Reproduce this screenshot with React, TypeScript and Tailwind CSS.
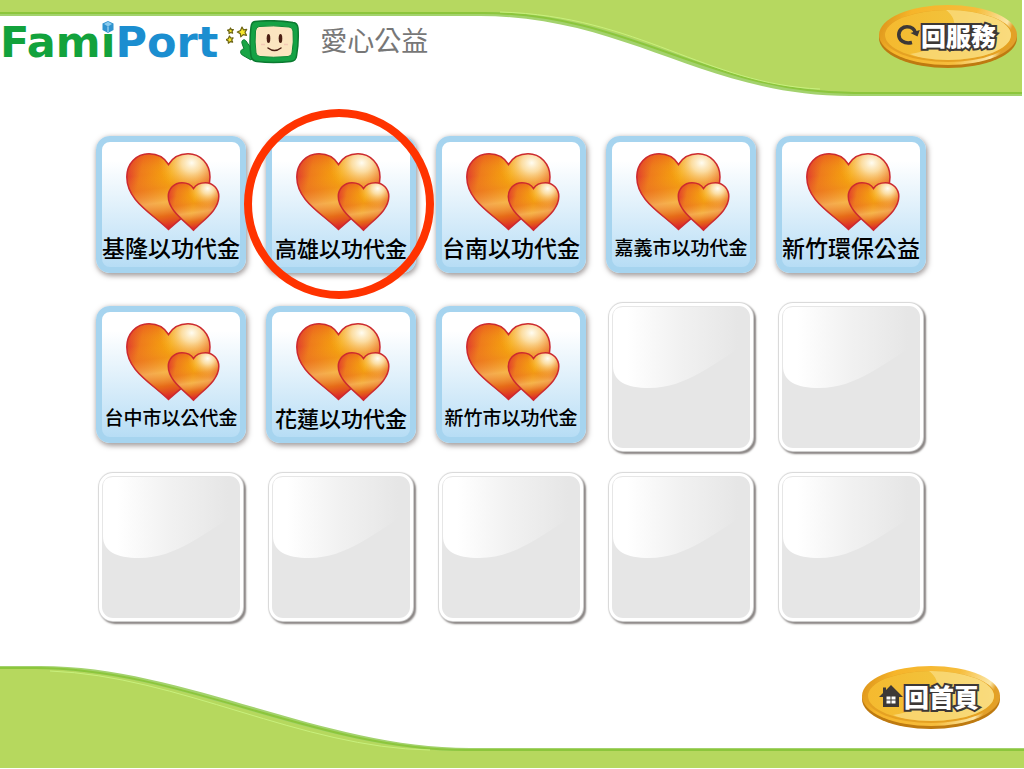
import type { ReactNode } from "react";

const CJK = "font-['Noto_Sans_CJK_TC','Noto_Sans',sans-serif]";

type Service = {
  name: string;
  size: "text-[23px]" | "text-[22px]" | "text-[19px]";
  circled?: boolean;
};

const services: (Service | null)[] = [
  { name: "基隆以功代金", size: "text-[23px]" },
  { name: "高雄以功代金", size: "text-[22px]", circled: true },
  { name: "台南以功代金", size: "text-[23px]" },
  { name: "嘉義市以功代金", size: "text-[19px]" },
  { name: "新竹環保公益", size: "text-[23px]" },
  { name: "台中市以公代金", size: "text-[19px]" },
  { name: "花蓮以功代金", size: "text-[22px]" },
  { name: "新竹市以功代金", size: "text-[19px]" },
  null,
  null,
  null,
  null,
  null,
  null,
  null,
];

function Gradients() {
  return (
    <svg className="absolute size-0" aria-hidden="true">
      <defs>
        <linearGradient id="heartFill" x1="0" y1="0.35" x2="1" y2="0.55">
          <stop offset="0" stopColor="#e2402c" />
          <stop offset="0.14" stopColor="#ee7a1c" />
          <stop offset="0.5" stopColor="#f6a90c" />
          <stop offset="0.8" stopColor="#f09018" />
          <stop offset="1" stopColor="#e4502a" />
        </linearGradient>
        <linearGradient id="heartLow" x1="0.35" y1="0" x2="0.5" y2="1">
          <stop offset="0" stopColor="#e8501c" stopOpacity="0.5" />
          <stop offset="0.25" stopColor="#f09a18" stopOpacity="0" />
          <stop offset="0.45" stopColor="#e8702c" stopOpacity="0.3" />
          <stop offset="0.64" stopColor="#f7c088" stopOpacity="0.5" />
          <stop offset="0.82" stopColor="#e0521c" stopOpacity="0.7" />
          <stop offset="1" stopColor="#d9152c" />
        </linearGradient>
        <radialGradient id="heartShine" cx="0.78" cy="0.12" r="0.4">
          <stop offset="0" stopColor="#fffdf2" />
          <stop offset="0.3" stopColor="#fde9bb" stopOpacity="0.85" />
          <stop offset="1" stopColor="#f8b030" stopOpacity="0" />
        </radialGradient>
        <linearGradient id="gloss" x1="0" y1="0" x2="1" y2="0">
          <stop offset="0.1" stopColor="#ffffff" />
          <stop offset="0.5" stopColor="#f1f1f1" />
          <stop offset="0.92" stopColor="#e6e6e6" />
        </linearGradient>
      </defs>
    </svg>
  );
}

const BIG =
  "M42.5 11.5C38 4 31 .8 23 .8C10 .8 .8 11 .8 24C.8 47 24 59 42.5 76.5C61 59 84 47 84 24C84 11 74.500 .8 62 .8C54 .8 47 4 42.5 11.5Z";
const SMALL =
  "M67.500 35.500C65 31.500 60.500 29.800 56 29.800C48 29.800 42.300 36 42.300 43.500C42.300 57 57 66.500 67.500 77.200C78 66.500 92.800 57 92.800 43.500C92.800 36 87 29.800 79.500 29.800C74.500 29.800 70 31.500 67.500 35.500Z";

function Hearts() {
  return (
    <svg viewBox="0 0 94 79" className="ml-1 h-[79px] w-[94px]" aria-hidden="true">
      {[BIG, SMALL].map((d) => (
        <g key={d}>
          <path d={d} fill="url(#heartFill)" />
          <path d={d} fill="url(#heartLow)" />
          <path d={d} fill="url(#heartShine)" stroke="#cc2a30" strokeWidth="1.5" />
        </g>
      ))}
    </svg>
  );
}

function ServiceTile({ name, size, circled }: Service) {
  return (
    <div className="relative pt-[3px]">
      <button
        type="button"
        className="flex h-[137px] w-full flex-col items-center rounded-[14px] border-[6px] border-[#a6d4ef] bg-linear-to-b from-white from-15% to-[#b7ddf5] pt-[11px] shadow-[1px_2px_5px_1px_rgba(80,70,70,0.5)]"
      >
        <Hearts />
        <span className={`leading-[30px] font-medium whitespace-nowrap text-black ${CJK} ${size}`}>
          {name}
        </span>
      </button>
      {circled && (
        <span className="pointer-events-none absolute -top-6 -left-[22px] z-10 size-[190px] rounded-full border-8 border-[#ff3300]" />
      )}
    </div>
  );
}

function EmptyTile() {
  return (
    <div className="px-[3px] pb-[2px]">
      <div className="h-full overflow-hidden rounded-[14px] border-[3px] border-white bg-[#e6e6e6] shadow-[0_0_1px_1px_#d6d6d6,2px_2px_2px_1px_#85807f]">
        <svg viewBox="0 0 140 142" preserveAspectRatio="none" className="size-full" aria-hidden="true">
          <path d="M1 11Q1 1 11 1H130Q139 1 139 11V36C105 56 76 82 38 82C14 82 1 75 1 60Z" fill="url(#gloss)" />
        </svg>
      </div>
    </div>
  );
}

function OvalButton({ icon, label, id }: { icon: ReactNode; label: string; id: string }) {
  const body = `${id}-body`;
  const rim = `${id}-rim`;
  const clip = `${id}-clip`;
  return (
    <button type="button" className="relative flex h-[65px] w-[140px] items-center justify-center gap-px pr-1 pb-1">
      <svg viewBox="0 0 140 65" className="absolute inset-0 size-full" aria-hidden="true">
        <defs>
          <linearGradient id={rim} x1="0" y1="0" x2="1" y2="0.2">
            <stop offset="0" stopColor="#d58a16" />
            <stop offset="0.25" stopColor="#f6b52a" />
            <stop offset="0.7" stopColor="#f6bd3c" />
            <stop offset="0.95" stopColor="#fbe6a6" />
            <stop offset="1" stopColor="#e2a02a" />
          </linearGradient>
          <linearGradient id={body} x1="0" y1="0" x2="1" y2="0">
            <stop offset="0" stopColor="#f5b92e" />
            <stop offset="0.6" stopColor="#f2c33c" />
            <stop offset="1" stopColor="#f7d36a" />
          </linearGradient>
          <clipPath id={clip}>
            <ellipse cx="70" cy="31" rx="63" ry="25" />
          </clipPath>
        </defs>
        <ellipse cx="70" cy="34" rx="69" ry="30" fill="#be7a10" />
        <ellipse cx="70" cy="31" rx="69" ry="30" fill={`url(#${rim})`} />
        <ellipse cx="70" cy="32" rx="65" ry="26" fill="#e5a122" />
        <g clipPath={`url(#${clip})`}>
          <rect width="140" height="65" fill={`url(#${body})`} />
          <path d="M68 6C84 18 80 42 32 50Q60 62 100 58L140 40V0Z" fill="#fae08c" opacity="0.65" />
        </g>
      </svg>
      <span className="relative">{icon}</span>
      <span
        className={`relative text-[25px] leading-8 font-black text-white [-webkit-text-stroke:4px_#3d3836] [paint-order:stroke_fill] ${CJK}`}
      >
        {label}
      </span>
    </button>
  );
}

function ReturnIcon() {
  return (
    <svg viewBox="0 0 24 22" className="h-[22px] w-6" aria-hidden="true">
      <path d="M16 18.500C8 20.500 2.800 16 2.800 10.800C2.800 5.500 7 2.800 11 2.800C15.500 2.800 18.500 5 19.500 9" fill="none" stroke="#3d3836" strokeWidth="3.600" />
      <path d="M14.500 9L23.800 6L21.500 12.500Z" fill="#3d3836" />
    </svg>
  );
}

function HouseIcon() {
  return (
    <svg viewBox="0 0 24 24" className="size-6" aria-hidden="true">
      <path d="M12 1L24 13H20V23H4V13H0L4 9V3.500H7V6Z" fill="#3d3836" />
      <path d="M7.500 12.500h4v3h-4zM12.500 12.500h4v3h-4zM7.500 16.500h4v3h-4zM12.500 16.500h4v3h-4z" fill="#fff" />
    </svg>
  );
}

function Mascot() {
  return (
    <svg viewBox="0 0 74 44" className="h-11 w-[74px]" aria-hidden="true">
      <g fill="#f4e52c" stroke="#6c6414" strokeWidth="1.200" strokeLinejoin="round">
        <path d="M14 9l1.500 2.800 3.200-.4-1.700 2.900 1.500 3-3.300-.7-2.400 2.300-.5-3.300-3-1.600 3.200-1.500z" transform="translate(2 -2)" />
        <path d="M4.500 8l.9 1.600 2 .1-1.300 1.500.5 2-1.900-.7-1.700 1 .1-2-1.500-1.300 2-.5z" />
        <path d="M3.500 16l1.200 2 2.400-.1-1.400 2 .9 2.200-2.400-.5-1.800 1.600-.3-2.400-2.100-1.100 2.200-1z" />
      </g>
      <path d="M18 36C13 34 14 29 18 29L16 23.500C15 20 18.500 18.500 20 21L25 28L29 35L25 40Z" fill="#1aa546" stroke="#0c7c31" />
      <path d="M29 1.500Q48 -.5 67 2.500Q71.500 3 72 8Q73 22 70.500 36Q70 41 65 41.500Q47 43.500 31 41.500Q26 41 25 36Q23 22 25 7Q25.500 2 29 1.500Z" fill="#14a244" stroke="#0b7a30" strokeWidth="1.500" />
      <path d="M33 6.500Q47 5 63 7Q66.500 7.200 67 11Q68 22 66 33Q65.500 36 62 36.500Q47 38 34 36.500Q30.500 36 30 33Q28.500 22 29.500 11Q30 7 33 6.500Z" fill="#fbe5c0" stroke="#0b8a36" />
      <ellipse cx="42.500" cy="18.500" rx="1.800" ry="4.500" fill="#4b1e12" />
      <ellipse cx="54.500" cy="18.500" rx="1.800" ry="4.500" fill="#4b1e12" />
      <path d="M42 28Q48.500 33 55 28" fill="none" stroke="#4b1e12" strokeWidth="1.500" strokeLinecap="round" />
      <path d="M35 24.500h4M58 24.500h4" stroke="#f3c9b5" strokeWidth="1.500" />
    </svg>
  );
}

function CubeDot() {
  return (
    <svg viewBox="0 0 12 12" className="absolute top-px left-1/2 size-3 -translate-x-1/2" aria-hidden="true">
      <path d="M6 0L11.500 2.500V9L6 12L.5 9V2.500Z" fill="#2f93cf" />
      <path d="M6 .8L10 3L6 5.500L2 3Z" fill="#8ccbed" />
      <path d="M6 5.500V11" stroke="#bfe3f6" />
    </svg>
  );
}

function TopWave() {
  return (
    <svg viewBox="0 0 1024 97" preserveAspectRatio="none" className="absolute inset-0 size-full" aria-hidden="true">
      <path d="M0 0H1022V96H850C705 96 625 16 480 16H0Z" fill="#a3d26d" />
      <path d="M0 0H1022V92H856C711 92 631 12 486 12H0Z" fill="#b6d860" />
      <path d="M1022 93H854C709 93 629 13 484 13H0" fill="none" stroke="#8cc63c" strokeWidth="2" />
      <path d="M820 89C705 84 640 16 500 12" fill="none" stroke="#c8f07c" />
    </svg>
  );
}

function BottomWave() {
  return (
    <svg viewBox="0 0 1024 104" preserveAspectRatio="none" className="absolute inset-0 size-full" aria-hidden="true">
      <path d="M0 1H40C185 1 320 83 470 83H1024V103H0Z" fill="#a3d26d" />
      <path d="M0 4H34C179 4 314 86 464 86H1024V103H0Z" fill="#b6d85e" />
      <path d="M0 3H36C181 3 316 85 466 85H1024" fill="none" stroke="#8cc63c" strokeWidth="2" />
      <path d="M50 6C180 11 300 83 430 85" fill="none" stroke="#c8f07c" />
    </svg>
  );
}

export default function App() {
  return (
    <div className={`flex min-h-screen flex-col bg-white ${CJK}`}>
      <Gradients />
      <header className="relative flex h-[97px] items-start justify-between">
        <TopWave />
        <div className="relative flex items-start pt-5">
          <a
            href="#home"
            className="mt-2 flex text-[43px] leading-7 font-bold text-[#12a23c] font-['DejaVu_Sans',sans-serif]"
          >
            <span>Fam</span>
            <span className="relative -mt-2 pt-2">
              i<CubeDot />
            </span>
            <span className="text-[#1b8ed0]">Port</span>
          </a>
          <div className="ml-2">
            <Mascot />
          </div>
          <h1 className="ml-5 text-[27px] leading-10 font-normal text-[#777777]">愛心公益</h1>
        </div>
        <div className="relative pt-1 pr-[6px]">
          <OvalButton id="service" icon={<ReturnIcon />} label="回服務" />
        </div>
      </header>

      <main className="flex-1 pt-9 pr-[2px]">
        <div className="mx-auto grid w-full max-w-[830px] auto-rows-[150px] grid-cols-5 gap-5">
          {services.map((service, i) =>
            service ? <ServiceTile key={service.name} {...service} /> : <EmptyTile key={i} />,
          )}
        </div>
      </main>

      <footer className="relative flex h-[104px] items-start justify-end pr-[23px]">
        <BottomWave />
        <OvalButton id="home" icon={<HouseIcon />} label="回首頁" />
      </footer>
    </div>
  );
}
